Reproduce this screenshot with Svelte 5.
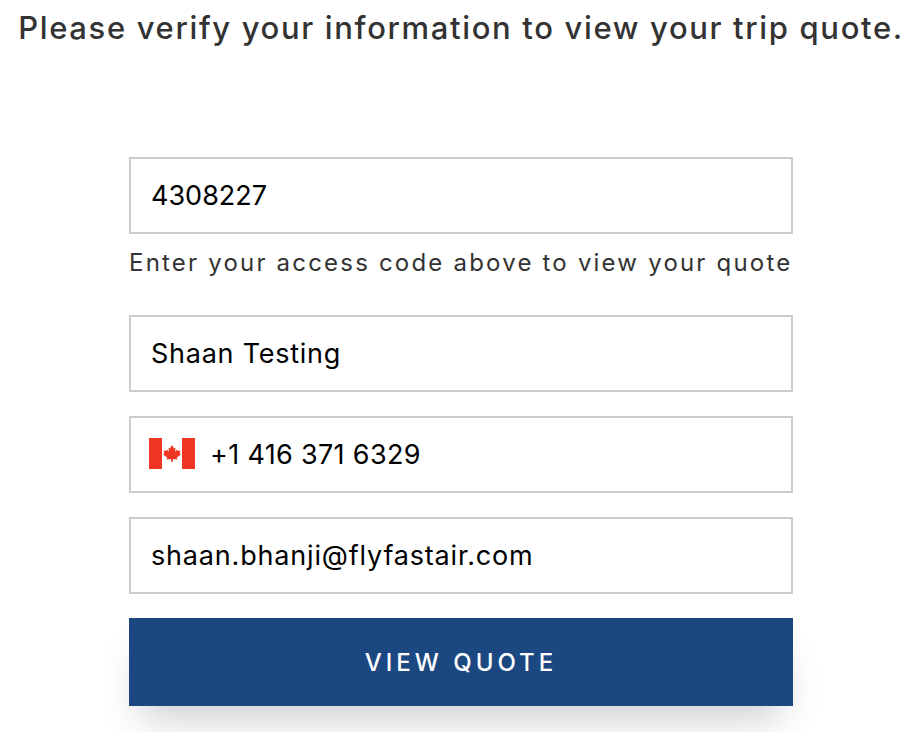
<script>
  let code = '4308227';
  let name = 'Shaan Testing';
  let phone = '+1 416 371 6329';
  let email = 'shaan.bhanji@flyfastair.com';
</script>

<div class="page">
  <h2>Please verify your information to view your trip quote.</h2>

  <form class="quote-form" on:submit|preventDefault>
    <input class="code" type="text" bind:value={code} />
    <p class="hint">Enter your access code above to view your quote</p>

    <input class="name" type="text" bind:value={name} />

    <div class="phone">
      <svg class="flag" viewBox="0 0 46 31" width="46" height="31" aria-hidden="true">
        <rect width="46" height="31" fill="#fff" />
        <rect width="13" height="31" fill="#ee3524" />
        <rect x="33" width="13" height="31" fill="#ee3524" />
        <polygon
          fill="#ee3524"
          points="23,7 25,10.500 26.500,9.700 26,13.700 28.200,11.500 28.800,13 31.500,12.500 30.700,15.500 32,16.200 27.800,19.700 28.300,21.400 24,20.900 23.700,24 22.300,24 22,20.900 17.700,21.400 18.200,19.700 14,16.200 15.300,15.500 14.500,12.500 17.200,13 17.800,11.500 20,13.700 19.500,9.700 21,10.500"
        />
      </svg>
      <input type="tel" bind:value={phone} />
    </div>

    <input class="email" type="email" bind:value={email} />

    <button type="submit">VIEW QUOTE</button>
  </form>
</div>

<style>
  :global(body) {
    background: #fff;
    overflow: hidden;
  }

  .page {
    height: 732px;
    overflow: hidden;
    font-family: Inter, "Open Sans", sans-serif;
  }

  h2 {
    margin: 0;
    padding-top: 9px;
    text-align: center;
    font-size: 31px;
    line-height: 38px;
    font-weight: 500;
    letter-spacing: 1.65px;
    color: #333;
    white-space: nowrap;
  }

  .quote-form {
    display: flex;
    flex-direction: column;
    width: 664px;
    margin: 110px auto 0;
  }

  input {
    box-sizing: border-box;
    width: 100%;
    height: 77px;
    padding: 0 20px;
    border: 2px solid #ccc;
    border-radius: 0;
    outline: none;
    background: #fff;
    font-family: inherit;
    font-size: 27px;
    letter-spacing: 0.33px;
    color: #000;
  }

  .code {
    letter-spacing: 0;
  }

  .name {
    letter-spacing: 0.75px;
  }

  .email {
    letter-spacing: 0.82px;
  }

  .hint {
    margin: 0;
    height: 81px;
    padding-top: 13px;
    box-sizing: border-box;
    font-size: 24px;
    line-height: 32px;
    letter-spacing: 2.2px;
    color: #333;
    white-space: nowrap;
  }

  .name,
  .phone {
    margin-bottom: 24px;
  }

  .phone {
    position: relative;
  }

  .phone input {
    padding-left: 79px;
  }

  .flag {
    position: absolute;
    left: 20px;
    top: 22px;
  }

  button {
    height: 88px;
    margin-top: 24px;
    border: none;
    background: #1c4882;
    color: #fff;
    font-family: inherit;
    font-size: 24px;
    font-weight: 500;
    letter-spacing: 4px;
    box-shadow: 0 24px 40px -12px rgba(0, 0, 0, 0.2);
    cursor: pointer;
  }
</style>
